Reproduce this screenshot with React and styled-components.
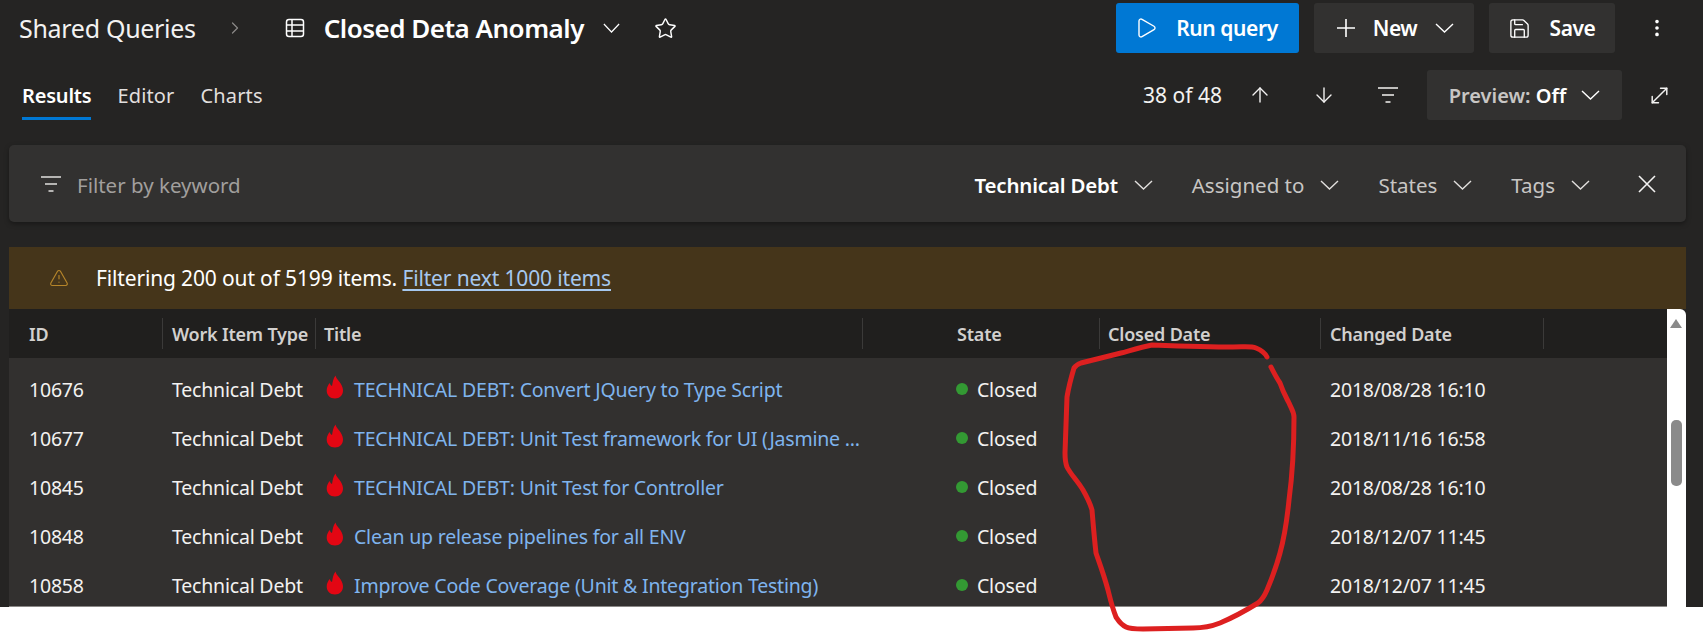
import React from 'react'
import styled, {createGlobalStyle} from 'styled-components'
import {Play, Save, EllipsisVertical, ArrowUp, ArrowDown, Star, MoveDiagonal, TriangleAlert, ChevronRight} from 'lucide-react'

const GlobalStyle = createGlobalStyle`
  html {
    overflow: hidden;
  }
  body {
    margin: 0;
    background: #ffffff;
    font-family: "Noto Sans", "Open Sans", sans-serif;
  }
`

const columns = '154px 153px 547px 237px 221px 223px 1fr'

const rows = [
  {id: '10676', title: 'TECHNICAL DEBT: Convert JQuery to Type Script', changed: '2018/08/28 16:10'},
  {id: '10677', title: 'TECHNICAL DEBT: Unit Test framework for UI (Jasmine ...', changed: '2018/11/16 16:58'},
  {id: '10845', title: 'TECHNICAL DEBT: Unit Test for Controller', changed: '2018/08/28 16:10'},
  {id: '10848', title: 'Clean up release pipelines for all ENV', changed: '2018/12/07 11:45'},
  {id: '10858', title: 'Improve Code Coverage (Unit & Integration Testing)', changed: '2018/12/07 11:45'},
]

const Chevron = ({w = 19, h = 10}) => (
  <svg width={w} height={h} viewBox="0 0 19 10" preserveAspectRatio="none" fill="none" stroke="currentColor" strokeWidth="1.4">
    <path d="M1 1l8.5 8L18 1" />
  </svg>
)

const FilterLines = () => (
  <svg width="20" height="16" viewBox="0 0 20 16" fill="none" stroke="currentColor" strokeWidth="1.6">
    <path d="M0 1h20M4 8h12M7.5 15h5" />
  </svg>
)

const TableIcon = () => (
  <svg width="20" height="20" viewBox="0 0 20 20" fill="none" stroke="currentColor" strokeWidth="1.5">
    <rect x="1.5" y="1.5" width="17" height="17" rx="2.5" />
    <path d="M1.5 7h17M1.5 13h17M7 1.5v17" />
  </svg>
)

const PlusIcon = () => (
  <svg width="18" height="18" viewBox="0 0 18 18" fill="none" stroke="currentColor" strokeWidth="1.6">
    <path d="M9 0v18M0 9h18" />
  </svg>
)

const CloseIcon = () => (
  <svg width="18" height="18" viewBox="0 0 18 18" fill="none" stroke="currentColor" strokeWidth="1.6">
    <path d="M1 1l16 16M17 1L1 17" />
  </svg>
)

const Flame = () => (
  <svg width="18" height="24" viewBox="0 0 18 24" fill="#e30613">
    <path d="M9.5 0.5C10.5 5 16.5 8 17 15C17.3 20 13.5 23.5 9 23.5C4 23.5 0.7 20 0.7 15.5C0.7 12.5 2 10 3.8 8C4.2 9.5 4.8 10.5 6 11C6.8 7.5 7 3.5 9.5 0.5Z" />
  </svg>
)

function App() {
  return (
    <Shell>
      <GlobalStyle />
      <Page>
        <TopBar>
          <Crumb>Shared Queries</Crumb>
          <CrumbArrow><ChevronRight size={20} strokeWidth={1.5} /></CrumbArrow>
          <QueryIcon><TableIcon /></QueryIcon>
          <QueryName>Closed Deta Anomaly</QueryName>
          <QueryChevron><Chevron w={17} h={10} /></QueryChevron>
          <StarButton><Star size={23} strokeWidth={1.5} /></StarButton>
          <Actions>
            <ActionButton $primary $width="183px" $padRight="3px">
              <Play size={24} strokeWidth={1.4} />
              <span>Run query</span>
            </ActionButton>
            <ActionButton $width="160px" $padLeft="3px">
              <PlusIcon />
              <span>New</span>
              <Chevron />
            </ActionButton>
            <ActionButton $width="126px">
              <Save size={23} strokeWidth={1.4} />
              <span>Save</span>
            </ActionButton>
            <Kebab><EllipsisVertical size={22} strokeWidth={2} /></Kebab>
          </Actions>
        </TopBar>

        <TabBar>
          <Tab $active>Results</Tab>
          <Tab>Editor</Tab>
          <Tab>Charts</Tab>
          <Pager>
            <Count>38 of 48</Count>
            <PagerIcon $left="26px"><ArrowUp size={24} strokeWidth={1.4} /></PagerIcon>
            <PagerIcon $left="40px"><ArrowDown size={24} strokeWidth={1.4} /></PagerIcon>
            <PagerIcon $left="42px"><FilterLines /></PagerIcon>
            <Preview>
              <span>Preview: <b>Off</b></span>
              <Chevron />
            </Preview>
            <PagerIcon $left="25px"><MoveDiagonal size={25} strokeWidth={1.4} /></PagerIcon>
          </Pager>
        </TabBar>

        <FilterBar>
          <FilterIcon><FilterLines /></FilterIcon>
          <Placeholder>Filter by keyword</Placeholder>
          <Dropdown $active>Technical Debt <Chevron /></Dropdown>
          <Dropdown>Assigned to <Chevron /></Dropdown>
          <Dropdown>States <Chevron /></Dropdown>
          <Dropdown>Tags <Chevron /></Dropdown>
          <ClearButton><CloseIcon /></ClearButton>
        </FilterBar>

        <Banner>
          <BannerIcon><TriangleAlert size={20} strokeWidth={1.4} /></BannerIcon>
          <span>Filtering 200 out of 5199 items. <BannerLink>Filter next 1000 items</BannerLink></span>
        </Banner>

        <TableWrap>
          <Table>
            <HeadRow>
              <HeadCell $pad="20px">ID</HeadCell>
              <HeadCell $pad="9px">Work Item Type</HeadCell>
              <HeadCell $pad="8px">Title</HeadCell>
              <HeadCell $pad="94px">State</HeadCell>
              <HeadCell $pad="8px">Closed Date</HeadCell>
              <HeadCell $pad="9px">Changed Date</HeadCell>
            </HeadRow>
            <Body>
              {rows.map((row) => (
                <Row key={row.id}>
                  <Cell $pad="20px">{row.id}</Cell>
                  <Cell $pad="9px">Technical Debt</Cell>
                  <TitleCell>
                    <Flame />
                    <TitleLink>{row.title}</TitleLink>
                  </TitleCell>
                  <StateCell><Dot />Closed</StateCell>
                  <Cell />
                  <Cell $pad="9px">{row.changed}</Cell>
                </Row>
              ))}
            </Body>
          </Table>
          <Scrollbar>
            <ScrollUp />
            <ScrollThumb />
          </Scrollbar>
        </TableWrap>
      </Page>

      <Annotation width="1703" height="633" viewBox="0 0 1703 633">
        <path d="M1271 367C1275 375 1278 380 1280 383C1283 392 1286 397 1289 403C1292 410 1294 412 1294 417C1294 450 1293 470 1289 500C1287 520 1285 535 1280 553C1276 568 1272 578 1267 590C1264 597 1262 600 1258 603C1245 611 1232 618 1220 623C1210 627 1203 628 1193 628L1143 629C1135 629 1130 629 1126 627C1120 624 1118 620 1116 617C1112 607 1110 598 1108 590C1103 572 1099 562 1096 553C1094 535 1093 522 1092 510C1090 503 1087 497 1083 490C1077 480 1071 475 1067 467C1065 462 1065 458 1065 453L1067 397C1069 385 1071 378 1074 368C1076 365 1078 364 1081 363L1121 353C1132 350 1142 347 1152 345C1180 346 1210 347 1233 347C1245 347 1251 346 1256 348C1261 350 1265 353 1267 357" />
      </Annotation>
    </Shell>
  )
}

const Shell = styled.div`
  position: relative;
  height: 633px;
  background: #ffffff;
`

const Page = styled.div`
  height: 607px;
  background: #252423;
  color: #ffffff;
  display: flex;
  flex-direction: column;
`

const TopBar = styled.div`
  display: flex;
  align-items: center;
  height: 50px;
  margin-top: 3px;
  padding-left: 19px;
`

const Crumb = styled.div`
  font-size: 25px;
  letter-spacing: -0.3px;
  color: #f3f2f1;
`

const CrumbArrow = styled.div`
  display: flex;
  margin-left: 29px;
  color: #8a8886;
`

const QueryIcon = styled.div`
  display: flex;
  margin-left: 40px;
`

const QueryName = styled.div`
  margin-left: 19px;
  font-size: 26px;
  font-weight: 600;
  letter-spacing: -0.5px;
`

const QueryChevron = styled.div`
  display: flex;
  margin-left: 19px;
`

const StarButton = styled.div`
  display: flex;
  margin-left: 34px;
`

const Actions = styled.div`
  display: flex;
  align-items: center;
  gap: 15px;
  margin-left: auto;
  padding-right: 88px;
  position: relative;
`

const ActionButton = styled.div`
  display: flex;
  align-items: center;
  justify-content: center;
  gap: 18px;
  width: ${(p) => p.$width};
  height: 50px;
  box-sizing: border-box;
  padding-left: ${(p) => p.$padLeft || 0};
  padding-right: ${(p) => p.$padRight || 0};
  border-radius: 3px;
  background: ${(p) => (p.$primary ? '#0078d4' : '#323130')};
  font-size: 21px;
  font-weight: 600;
  letter-spacing: -0.4px;
`

const Kebab = styled.div`
  position: absolute;
  right: 35px;
  top: 14px;
  display: flex;
`

const TabBar = styled.div`
  display: flex;
  align-items: flex-start;
  margin-top: 17px;
  height: 50px;
  padding-left: 22px;
`

const Tab = styled.div`
  height: 50px;
  box-sizing: border-box;
  padding-top: 12px;
  margin-right: 26px;
  font-size: 20px;
  letter-spacing: ${(p) => (p.$active ? '-0.2px' : '0.15px')};
  font-weight: ${(p) => (p.$active ? 600 : 400)};
  color: ${(p) => (p.$active ? '#ffffff' : '#e1dfdd')};
  position: relative;

  &::after {
    content: "";
    display: ${(p) => (p.$active ? 'block' : 'none')};
    position: absolute;
    left: 0;
    right: 0;
    top: 47px;
    height: 3px;
    background: #0078d4;
  }
`

const Pager = styled.div`
  display: flex;
  align-items: center;
  height: 50px;
  margin-left: auto;
  padding-right: 31px;
`

const Count = styled.div`
  font-size: 21px;
  color: #f3f2f1;
`

const PagerIcon = styled.div`
  display: flex;
  margin-left: ${(p) => p.$left};
  color: #f3f2f1;
`

const Preview = styled.div`
  display: flex;
  align-items: center;
  justify-content: center;
  gap: 15px;
  width: 195px;
  height: 50px;
  margin-left: 29px;
  border-radius: 3px;
  background: #323130;
  color: #c8c6c4;
  font-size: 20px;
  font-weight: 600;

  b {
    color: #ffffff;
    font-weight: 600;
  }

  svg {
    color: #ffffff;
  }
`

const FilterBar = styled.div`
  display: flex;
  align-items: center;
  height: 77px;
  box-sizing: border-box;
  margin: 25px 17px 0 9px;
  border-radius: 5px;
  background: #323130;
  box-shadow: 0 2px 5px rgba(0, 0, 0, 0.35);
  color: #c8c6c4;
  font-size: 20.5px;
`

const FilterIcon = styled.div`
  display: flex;
  margin: 0 16px 0 32px;
  color: #e1dfdd;
`

const Placeholder = styled.div`
  flex: 1;
  padding-top: 3px;
  color: #a19f9d;
`

const Dropdown = styled.div`
  display: flex;
  align-items: center;
  gap: 16px;
  margin-right: 39px;
  padding-top: 3px;
  letter-spacing: ${(p) => (p.$active ? '-0.2px' : 0)};
  color: ${(p) => (p.$active ? '#ffffff' : '#c8c6c4')};
  font-weight: ${(p) => (p.$active ? 600 : 400)};

  svg {
    color: #e1dfdd;
  }
`

const ClearButton = styled.div`
  display: flex;
  margin: 0 30px 0 9px;
  color: #f3f2f1;
`

const Banner = styled.div`
  display: flex;
  align-items: center;
  height: 62px;
  margin: 25px 17px 0 9px;
  background: #45351a;
  font-size: 21px;
  letter-spacing: -0.15px;
`

const BannerIcon = styled.div`
  display: flex;
  margin: 0 27px 0 40px;
  color: #b5852a;
`

const BannerLink = styled.a`
  color: #a6c8ef;
  text-decoration: underline;
  text-underline-offset: 3px;
`

const TableWrap = styled.div`
  display: flex;
  flex: 1;
  min-height: 0;
  margin: 0 17px 0 9px;
`

const Table = styled.div`
  flex: 1;
  display: flex;
  flex-direction: column;
  min-width: 0;
`

const HeadRow = styled.div`
  display: grid;
  grid-template-columns: ${columns};
  align-items: center;
  height: 49px;
  flex-shrink: 0;
  background: #201f1e;
  color: #d2d0ce;
  font-size: 18px;
  font-weight: 600;
  letter-spacing: -0.2px;
`

const HeadCell = styled.div`
  height: 31px;
  line-height: 33px;
  padding-left: ${(p) => p.$pad};
  border-right: 1px solid #3b3a39;
  box-sizing: border-box;
  white-space: nowrap;
  overflow: hidden;
`

const Body = styled.div`
  flex: 1;
  min-height: 0;
  overflow: hidden;
  padding-top: 7px;
  background: #32302f;
  border-bottom: 1px solid #8a8886;
`

const Row = styled.div`
  display: grid;
  grid-template-columns: ${columns};
  align-items: center;
  height: 48.9px;
  color: #f3f2f1;
  font-size: 19.5px;
  letter-spacing: -0.2px;
`

const Cell = styled.div`
  padding-left: ${(p) => p.$pad || 0};
  white-space: nowrap;
`

const TitleCell = styled.div`
  display: flex;
  align-items: center;
  gap: 10px;
  padding-left: 10px;
  white-space: nowrap;
  svg {
    flex-shrink: 0;
    margin-top: -5px;
  }
`

const TitleLink = styled.span`
  color: #7fb4ee;
`

const StateCell = styled.div`
  display: flex;
  align-items: center;
  gap: 9px;
  padding-left: 93px;
`

const Dot = styled.span`
  width: 12px;
  height: 12px;
  border-radius: 50%;
  background: #339933;
`

const Scrollbar = styled.div`
  position: relative;
  flex: 0 0 19px;
  background: #ffffff;
  border-top-right-radius: 6px;
`

const ScrollUp = styled.div`
  position: absolute;
  left: 3px;
  top: 10px;
  border-left: 6px solid transparent;
  border-right: 6px solid transparent;
  border-bottom: 9px solid #8a8a8a;
`

const ScrollThumb = styled.div`
  position: absolute;
  left: 4px;
  top: 111px;
  width: 11px;
  height: 66px;
  border-radius: 5px;
  background: #8a8a8a;
`

const Annotation = styled.svg`
  position: absolute;
  left: 0;
  top: 0;
  fill: none;
  stroke: #dd2020;
  stroke-width: 5;
  stroke-linecap: round;
  pointer-events: none;
`

export default App
